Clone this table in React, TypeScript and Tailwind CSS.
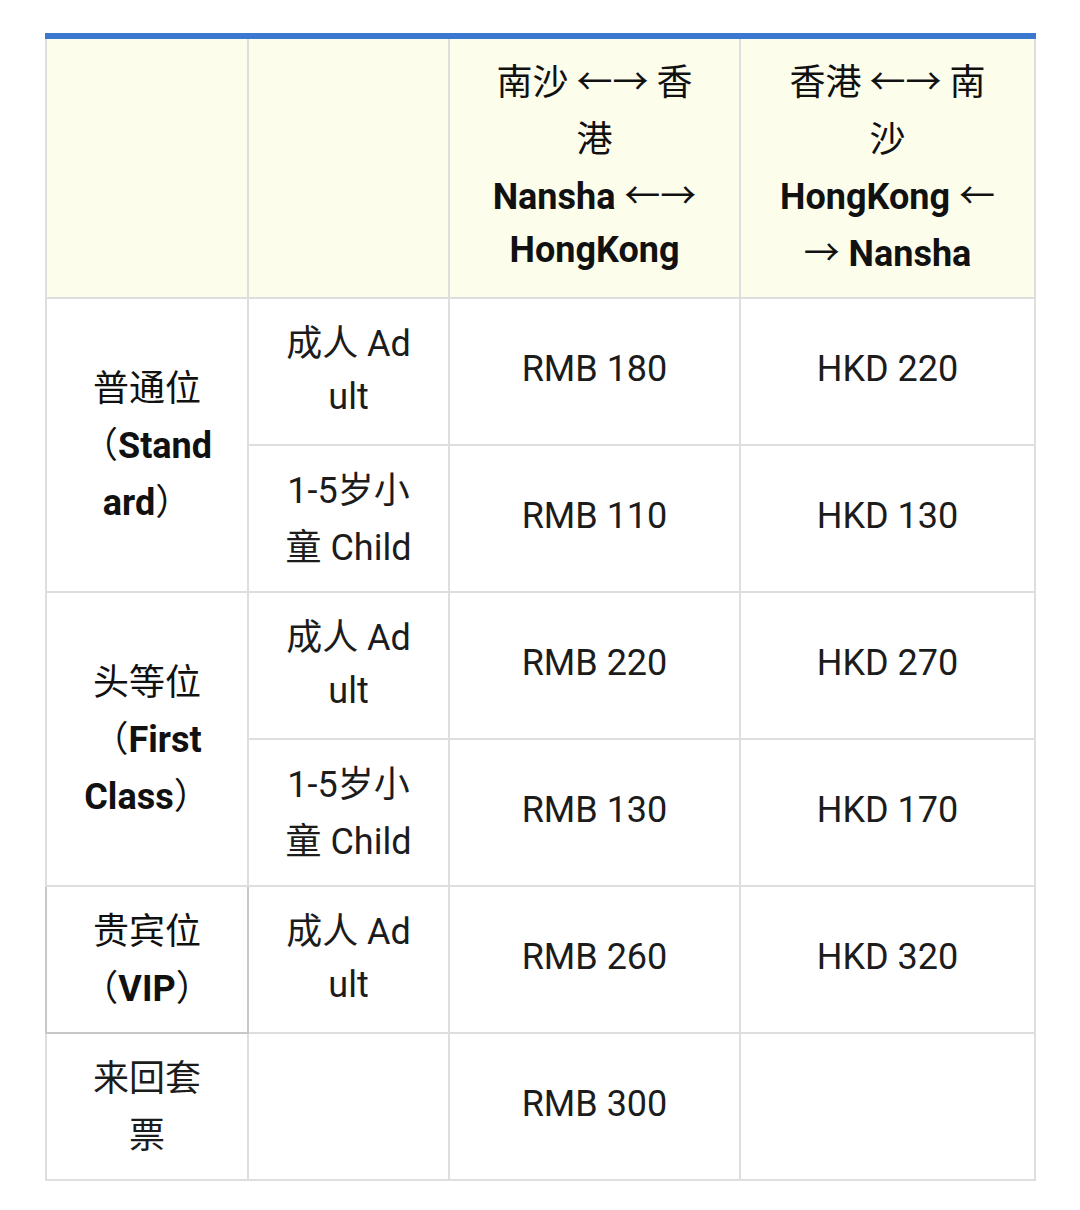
import React from "react";

const cjk = "font-['Noto_Sans_CJK_SC',sans-serif] font-normal";

function C({ children }: { children: React.ReactNode }) {
  return <span className={cjk}>{children}</span>;
}

function Lines({ lines }: { lines: React.ReactNode[] }) {
  return (
    <div className="flex flex-col items-center">
      {lines.map((l, i) => (
        <div key={i} className="whitespace-nowrap h-[57px] leading-[57px]">
          {l}
        </div>
      ))}
    </div>
  );
}

const td = "border-2 border-[#dedede] text-center align-middle px-0 pt-0 pb-[6px]";
const th = "border-2 border-[#dedede] text-center align-middle px-0 pt-0 pb-[7px] bg-[#fdfdec]";

const adult = <Lines lines={[<><C>成人</C> Ad</>, "ult"]} />;
const child = <Lines lines={[<>1-5<C>岁小</C></>, <><C>童</C> Child</>]} />;

export default function App() {
  return (
    <div className="w-[1080px] h-[1210px] bg-white pt-[33px] pl-[45px] font-['Roboto','Noto_Sans_CJK_SC',sans-serif] text-[36px] text-[#1c1c1c]">
      <table className="table-fixed border-collapse w-[989px] border-t-[6px] border-t-[#3b78d0]">
        <colgroup>
          <col className="w-[202px]" />
          <col className="w-[201px]" />
          <col className="w-[291px]" />
          <col className="w-[295px]" />
        </colgroup>
        <tbody>
          <tr className="h-[262px]">
            <td className={th}></td>
            <td className={th}></td>
            <td className={th + " font-bold text-[#111]"}>
              <Lines
                lines={[
                  <><C>南沙 ←→ 香</C></>,
                  <C>港</C>,
                  <>Nansha <C>←→</C></>,
                  "HongKong",
                ]}
              />
            </td>
            <td className={th + " font-bold text-[#111]"}>
              <Lines
                lines={[
                  <C>香港 ←→ 南</C>,
                  <C>沙</C>,
                  <>HongKong <C>←</C></>,
                  <><C>→</C> Nansha</>,
                ]}
              />
            </td>
          </tr>
          <tr className="h-[147px]">
            <td className={td + " font-bold text-[#111]"} rowSpan={2}>
              <Lines lines={[<C>普通位</C>, <><C>（</C>Stand</>, <>ard<C>）</C></>]} />
            </td>
            <td className={td}>{adult}</td>
            <td className={td}>RMB 180</td>
            <td className={td}>HKD 220</td>
          </tr>
          <tr className="h-[147px]">
            <td className={td}>{child}</td>
            <td className={td}>RMB 110</td>
            <td className={td}>HKD 130</td>
          </tr>
          <tr className="h-[147px]">
            <td className={td + " font-bold text-[#111]"} rowSpan={2}>
              <Lines lines={[<C>头等位</C>, <><C>（</C>First</>, <>Class<C>）</C></>]} />
            </td>
            <td className={td}>{adult}</td>
            <td className={td}>RMB 220</td>
            <td className={td}>HKD 270</td>
          </tr>
          <tr className="h-[147px]">
            <td className={td}>{child}</td>
            <td className={td}>RMB 130</td>
            <td className={td}>HKD 170</td>
          </tr>
          <tr className="h-[147px]">
            <td className="border-2 border-[#c8c8c8] text-center align-middle px-0 pt-0 pb-[6px] font-bold text-[#111]">
              <Lines lines={[<C>贵宾位</C>, <><C>（</C>VIP<C>）</C></>]} />
            </td>
            <td className={td}>{adult}</td>
            <td className={td}>RMB 260</td>
            <td className={td}>HKD 320</td>
          </tr>
          <tr className="h-[147px]">
            <td className={td}>
              <Lines lines={[<C>来回套</C>, <C>票</C>]} />
            </td>
            <td className={td}></td>
            <td className={td}>RMB 300</td>
            <td className={td}></td>
          </tr>
        </tbody>
      </table>
    </div>
  );
}
